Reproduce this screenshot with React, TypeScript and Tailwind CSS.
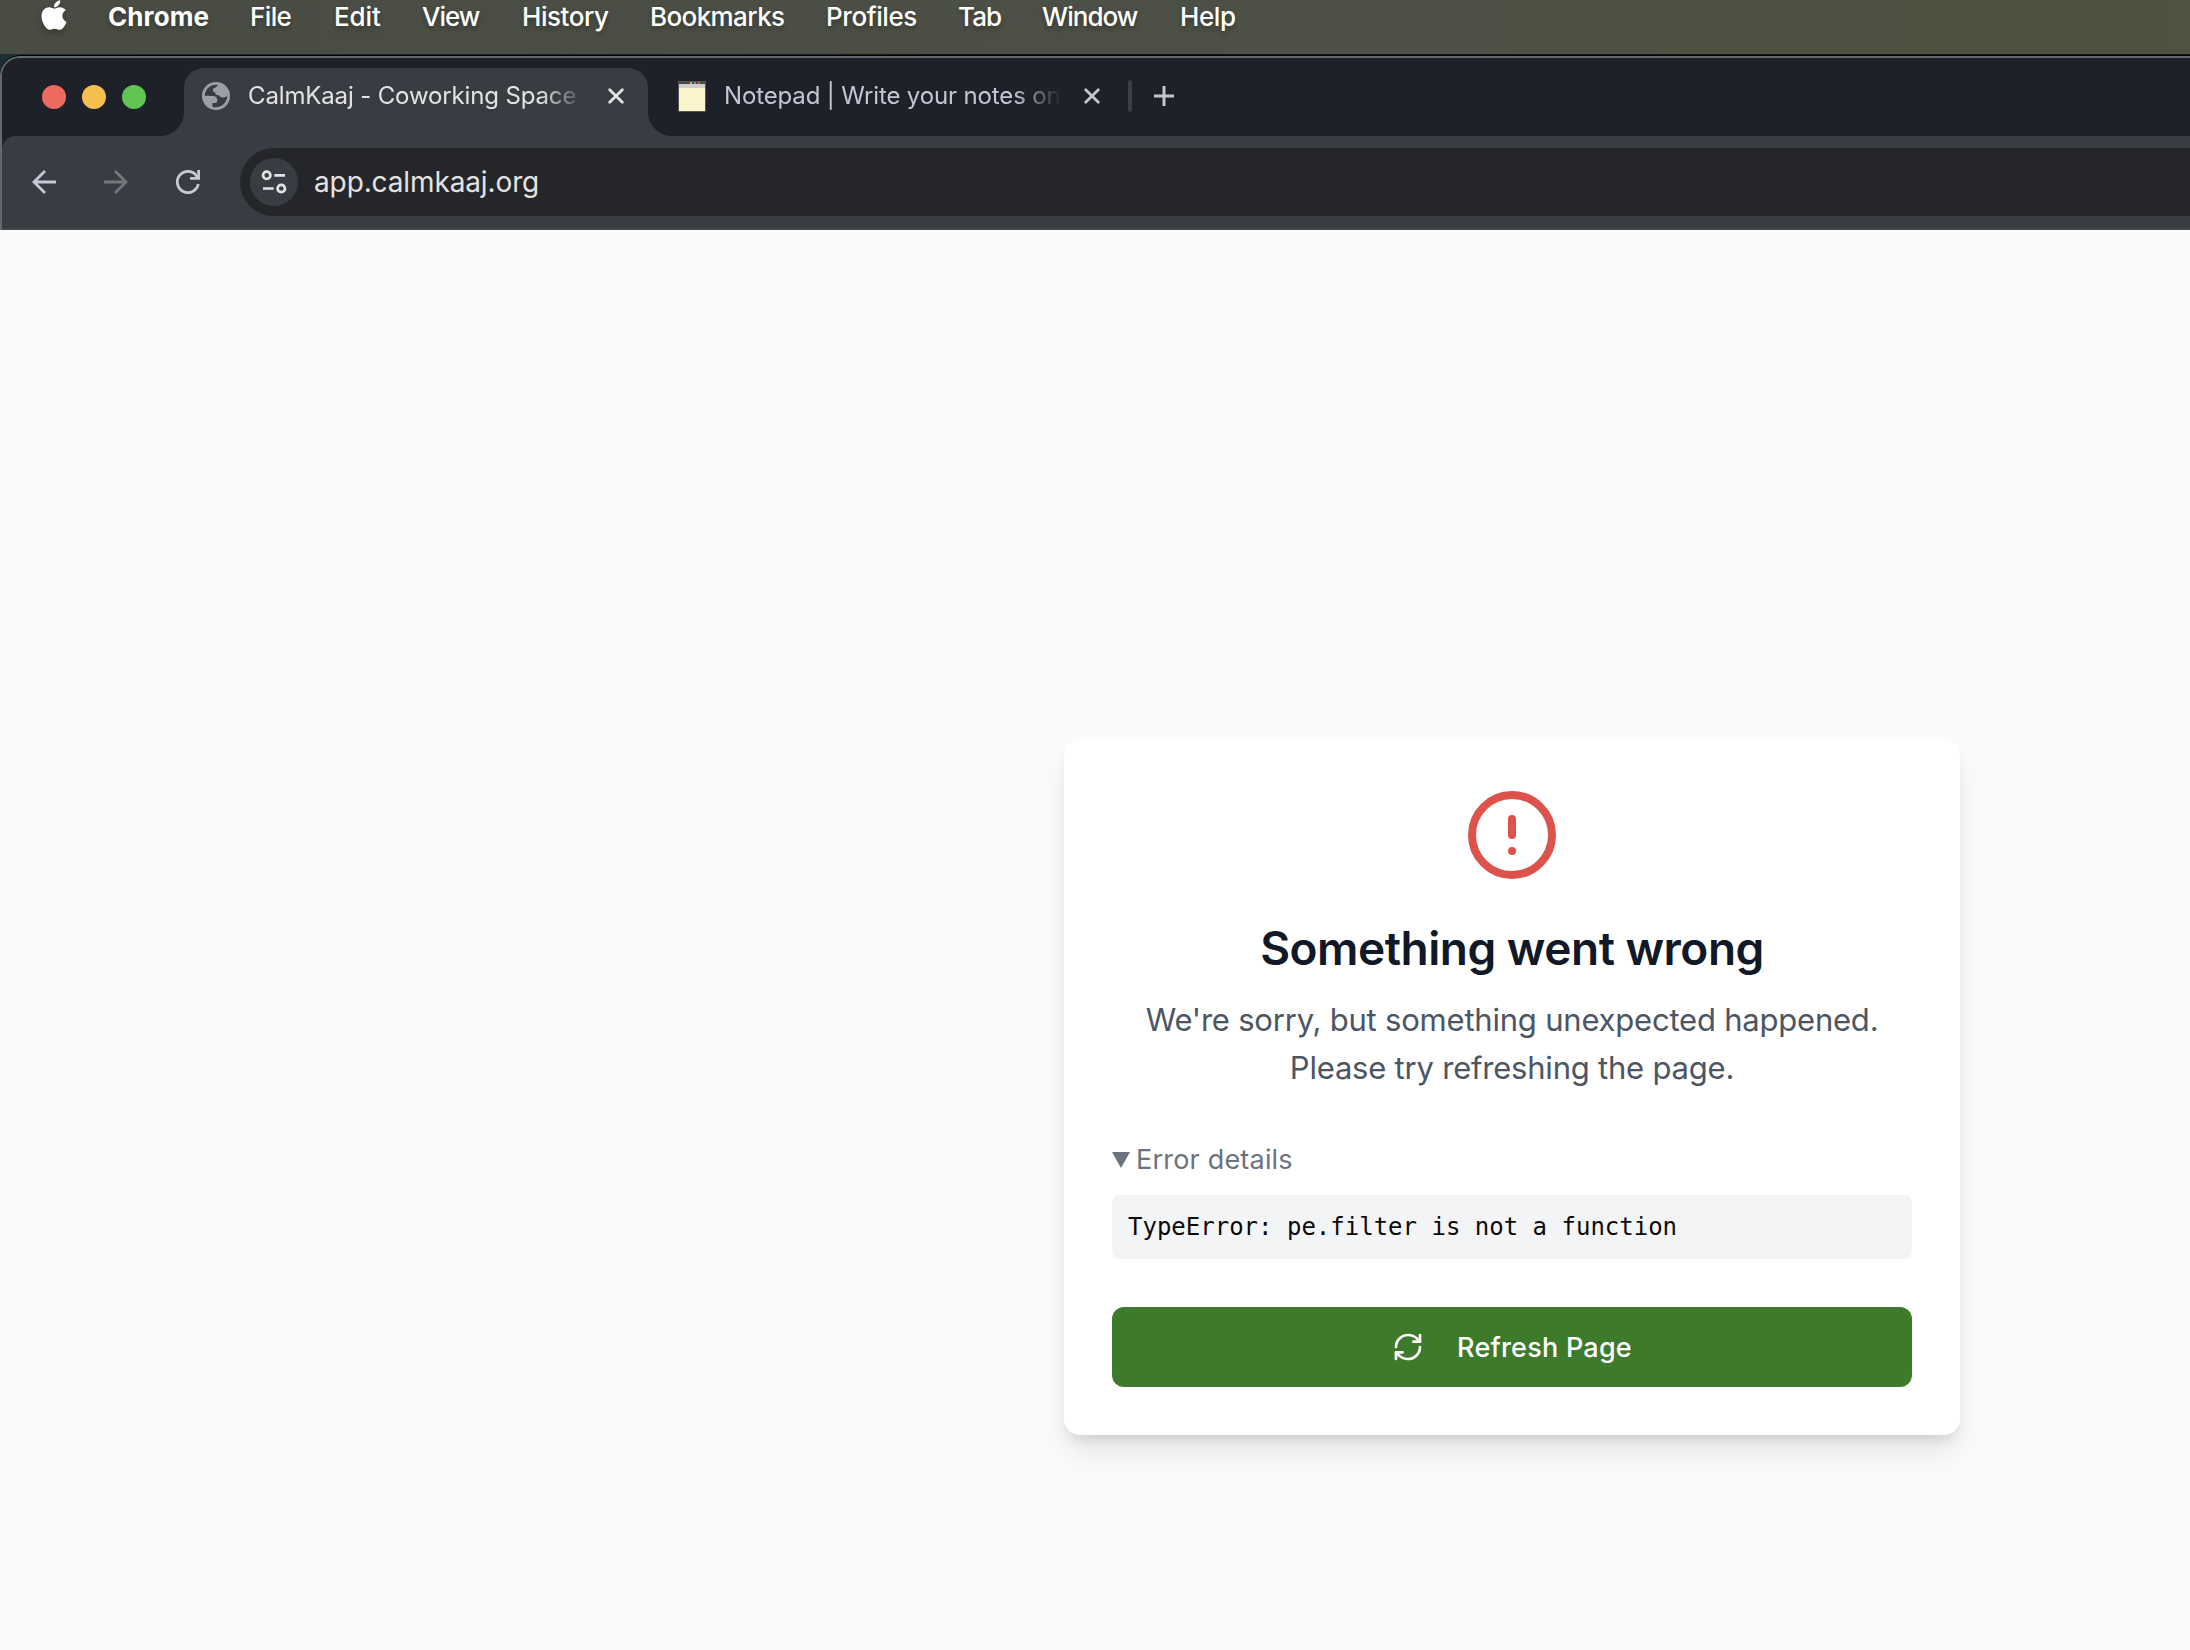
import { CircleAlert, RefreshCw } from "lucide-react";
import { FaApple } from "react-icons/fa";

const menuItems = [
  { label: "Chrome", cls: "w-[142px] font-bold tracking-[0.1px]" },
  { label: "File", cls: "w-[84px] font-medium tracking-[-0.6px]" },
  { label: "Edit", cls: "w-[88px] font-medium tracking-[-0.1px]" },
  { label: "View", cls: "w-[100px] font-medium tracking-[-1px]" },
  { label: "History", cls: "w-[128px] font-medium tracking-[-0.45px]" },
  { label: "Bookmarks", cls: "w-[176px] font-medium tracking-[-0.6px]" },
  { label: "Profiles", cls: "w-[132px] font-medium tracking-[-0.42px]" },
  { label: "Tab", cls: "w-[84px] font-medium tracking-[-0.9px]" },
  { label: "Window", cls: "w-[138px] font-medium tracking-[-0.95px]" },
  { label: "Help", cls: "w-[80px] font-medium tracking-[-0.4px]" },
];

function MenuBar() {
  return (
    <div className="flex h-[54px] items-start overflow-hidden bg-linear-to-r from-[#494c42] via-[#4d5046] via-60% to-[#51513f] text-white [text-shadow:0_3px_5px_rgba(0,0,0,0.3)]">
      <FaApple className="-mt-[2px] ml-[41px] h-[34px] w-[26px] shrink-0 drop-shadow-[0_3px_3px_rgba(0,0,0,0.25)]" />
      <div className="ml-[41px] flex text-[26px] leading-[33px]">
        {menuItems.map((m) => (
          <span key={m.label} className={m.cls}>
            {m.label}
          </span>
        ))}
      </div>
    </div>
  );
}

function CloseIcon({ className }: { className: string }) {
  return (
    <svg viewBox="0 0 16 16" className={className} fill="none" stroke="currentColor" strokeWidth="2.8" strokeLinecap="round">
      <path d="M1.7 1.7 14.3 14.3M14.3 1.7 1.7 14.3" />
    </svg>
  );
}

function GlobeIcon() {
  return (
    <svg viewBox="0 0 28 28" className="ml-[18px] h-7 w-7 shrink-0">
      <circle cx="14" cy="14" r="14" fill="#9aa0a6" />
      <path
        d="M2.7 13.8C2.8 8 7.3 3.1 13.4 2.8c1 0 1.9.1 2.7.3-.9.8-1.6 1.6-2.3 2.3-1.8.1-3 1.1-3 2.8 0 1.2 1 2 2.3 2.1.1 1.9 1.1 2.9 2.9 2.9.9 0 1.3.6 1.9 1.2.8.8 2 1.2 3.4 1.1 1.7-.1 3-.7 4-1.7C25.400 20 20.300 25.300 14 25.300c-1.300 0-2.500-.2-3.600-.6v-3.600h2c1.900 0 3-1.200 3-2.900 0-2.700-2-4.100-4.600-4.200z"
        fill="#3a3c43"
      />
    </svg>
  );
}

function NotepadIcon() {
  return (
    <div className="ml-[30px] flex h-[31px] w-7 shrink-0 flex-col border border-[#55544f] bg-[#faf4cc]">
      <div className="flex h-[2px] justify-center gap-[2px] bg-[#4a4a4a] pl-1.5">
        <span className="w-[2px] bg-[#d9a14a]" />
        <span className="w-[2px] bg-[#5a8fd6]" />
        <span className="w-[2px] bg-[#d65a4a]" />
      </div>
      <div className="h-1 bg-[#cfcfcd]" />
    </div>
  );
}

function TabStrip() {
  return (
    <div className="flex h-[78px] items-start bg-[#1e2129]">
      <div className="mt-[27px] ml-[40px] flex gap-4">
        <span className="h-6 w-6 rounded-full bg-[#ed6a5e]" />
        <span className="h-6 w-6 rounded-full bg-[#f5bf4f]" />
        <span className="h-6 w-6 rounded-full bg-[#61c554]" />
      </div>
      <div className="relative mt-[10px] ml-[38px] flex h-[68px] w-[464px] rounded-t-[20px] bg-[#3a3c43]">
        <span className="absolute bottom-0 -left-6 h-6 w-6 bg-[radial-gradient(circle_at_0_0,transparent_23.5px,#3a3c43_24.5px)]" />
        <span className="absolute -right-6 bottom-0 h-6 w-6 bg-[radial-gradient(circle_at_100%_0,transparent_23.5px,#3a3c43_24.5px)]" />
        <div className="flex h-14 items-center">
          <GlobeIcon />
          <div className="ml-[18px] h-14 w-[334px] overflow-hidden text-[24px] leading-[55px] tracking-[-0.14px] whitespace-nowrap text-[#e3e3e3] [mask-image:linear-gradient(to_right,black_292px,transparent_338px)]">
            CalmKaaj - Coworking Space
          </div>
          <CloseIcon className="ml-[26px] h-4 w-4 text-[#e3e3e3]" />
        </div>
      </div>
      <div className="mt-[10px] flex h-14 items-center text-[#c4c7d2]">
        <NotepadIcon />
        <div className="ml-[18px] h-14 w-[340px] text-[24px] leading-[55px] tracking-[-0.14px] whitespace-nowrap [mask-image:linear-gradient(to_right,black_290px,transparent_338px)]">
          Notepad | Write your notes on
        </div>
        <CloseIcon className="ml-[20px] h-4 w-4" />
        <span className="ml-[28px] h-8 w-1 rounded-full bg-[#3c3e46]" />
        <svg viewBox="0 0 20 20" className="ml-[22px] h-5 w-5" fill="none" stroke="currentColor" strokeWidth="3">
          <path d="M10 0v20M0 10h20" />
        </svg>
      </div>
    </div>
  );
}

function Toolbar() {
  return (
    <div className="bg-[#1e2129]">
      <div className="flex h-[94px] items-start rounded-tl-[14px] border-b-2 border-[#48464d] bg-[#3a3c43] pt-3">
        <div className="mt-[22px] ml-[30px] flex gap-12 text-[#c5c9d6]">
          <svg viewBox="0 0 24 24" className="h-6 w-6" fill="none" stroke="currentColor" strokeWidth="2.8">
            <path d="M13 1 2 12l11 11M2 12h22" />
          </svg>
          <svg viewBox="0 0 24 24" className="h-6 w-6 text-[#76777b]" fill="none" stroke="currentColor" strokeWidth="2.8">
            <path d="m11 1 11 11-11 11M22 12H0" />
          </svg>
          <svg viewBox="0 0 24 24" className="h-6 w-6" fill="none" stroke="currentColor" strokeWidth="2.8">
            <path d="M22.300 14A10.600 10.600 0 1 1 20.800 6.200L22 8" />
            <path d="M22.600 0v8.300H14" />
          </svg>
        </div>
        <div className="ml-10 flex h-[68px] flex-1 items-center rounded-l-full bg-[#25262a]">
          <div className="ml-2.5 h-12 w-12 rounded-full bg-[#3a3c43]">
            <svg viewBox="0 0 48 48" className="h-12 w-12" fill="none" stroke="#e3e3e3" strokeWidth="2.7">
              <circle cx="16.700" cy="17.300" r="3.700" />
              <path d="M24.300 17.300H35M13 30.500h10.700" />
              <circle cx="31.300" cy="30.500" r="3.700" />
            </svg>
          </div>
          <span className="ml-4 text-[28px] leading-[68px] tracking-[-0.12px] text-[#e3e3e3]">app.calmkaaj.org</span>
        </div>
      </div>
    </div>
  );
}

function ErrorCard() {
  return (
    <div className="flex h-[696px] w-[896px] flex-col rounded-2xl bg-white px-12 pt-12 shadow-[0_20px_30px_-6px_rgba(0,0,0,0.1),0_8px_12px_-4px_rgba(0,0,0,0.1)]">
      <CircleAlert className="h-24 w-24 self-center text-[#de524c]" />
      <h1 className="mt-[33px] text-center text-[46px] leading-[64px] font-semibold tracking-[-0.49px] text-[#111827]">
        Something went wrong
      </h1>
      <p className="mt-4 text-center text-[31px] leading-[48px] tracking-[-0.21px] text-[#4b5563]">
        We're sorry, but something unexpected happened.
        <br />
        Please try refreshing the page.
      </p>
      <div className="mt-[47px] flex h-10 items-center text-[27px] tracking-[0.2px] text-[#6b7280]">
        <svg viewBox="0 0 18 16" className="mt-px h-4 w-[18px]" fill="currentColor">
          <path d="M0 0h18L9 16z" />
        </svg>
        <span className="ml-1.5 pt-0.5 leading-10">Error details</span>
      </div>
      <pre className="mt-4 rounded-lg bg-[#f3f4f6] p-4 font-['DejaVu_Sans_Mono',monospace] text-[24px] leading-8 text-[#0c0a09]">
        TypeError: pe.filter is not a function
      </pre>
      <button className="mt-12 flex h-20 items-center justify-center rounded-xl bg-[#3d7a2c] text-[27px] leading-10 font-medium tracking-[0.23px] text-white">
        <RefreshCw className="h-8 w-8" />
        <span className="ml-[33px] pt-0.5">Refresh Page</span>
      </button>
    </div>
  );
}

export default function App() {
  return (
    <div className="flex h-[1650px] w-[2190px] flex-col overflow-hidden bg-[#f9fafc] font-[Inter,sans-serif]">
      <MenuBar />
      <div className="bg-linear-to-r from-[#1d3038] via-[#15170f] to-[#1c1a10] pt-[2px]">
        <div className="overflow-hidden rounded-tl-[20px] border-t-2 border-l-2 border-[#66686e] bg-[#1e2129] shadow-[0_-1px_0_#000]">
          <TabStrip />
          <Toolbar />
        </div>
      </div>
      <main className="pt-[509px] pl-[1064px]">
        <ErrorCard />
      </main>
    </div>
  );
}
